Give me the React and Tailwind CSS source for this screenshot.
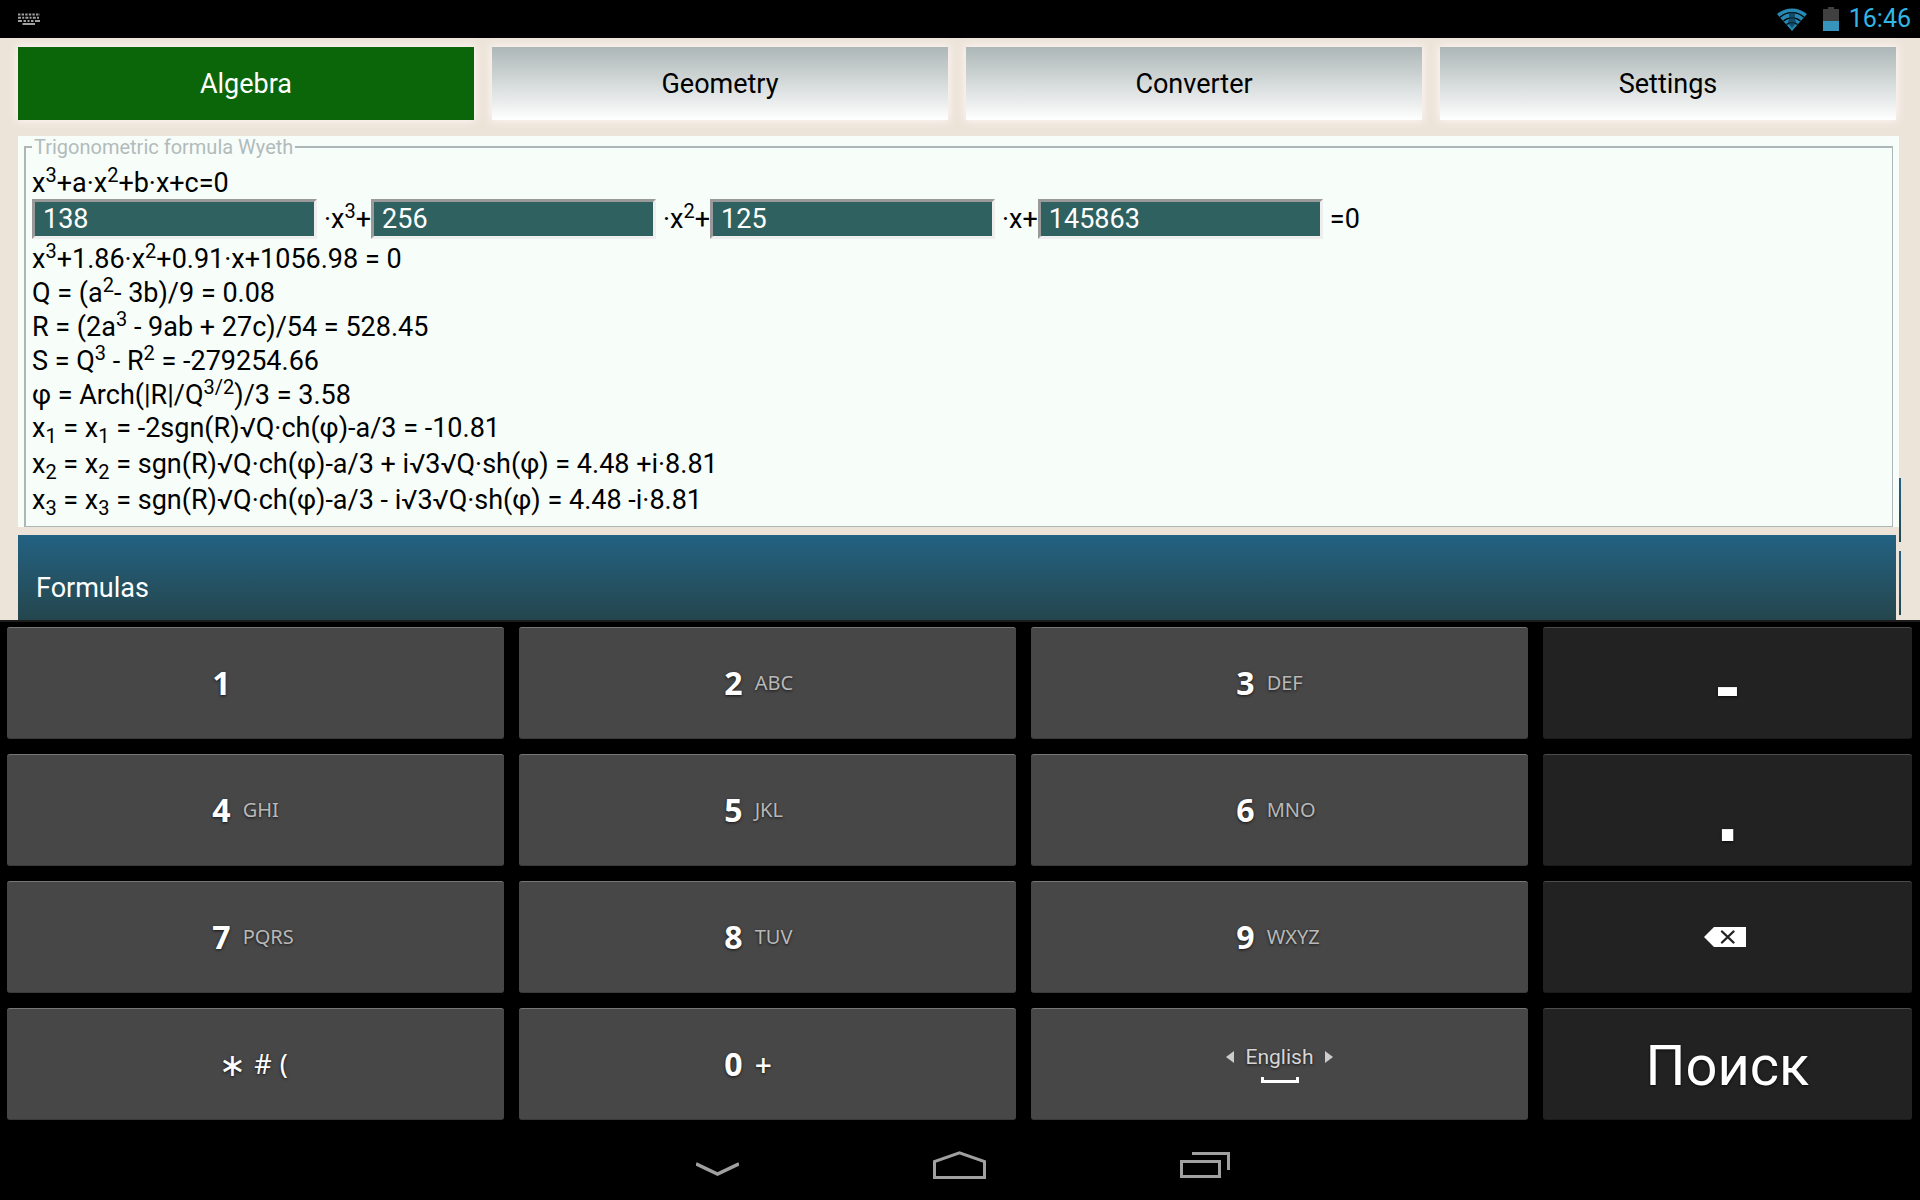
import { useState } from 'react';

const TABS = ['Algebra', 'Geometry', 'Converter', 'Settings'];

const KEYS = [
  [{ digit: '1', letters: '' }, { digit: '2', letters: 'ABC' }, { digit: '3', letters: 'DEF' }],
  [{ digit: '4', letters: 'GHI' }, { digit: '5', letters: 'JKL' }, { digit: '6', letters: 'MNO' }],
  [{ digit: '7', letters: 'PQRS' }, { digit: '8', letters: 'TUV' }, { digit: '9', letters: 'WXYZ' }],
];

const keyBase = 'flex items-center h-28 rounded-[3px] border-t border-b text-white [text-shadow:0_1px_3px_rgba(0,0,0,0.7)]';
const lightKey = `${keyBase} bg-[#474747] border-t-[#767676] border-b-[#3a3a3a]`;
const darkKey = `${keyBase} justify-center bg-[#222222] border-t-[#4c4c4c] border-b-[#1a1a1a]`;

function Sup({ children }) {
  return <sup className="text-[20px] top-[-10px]">{children}</sup>;
}

function Sub({ children }) {
  return <sub className="text-[20px] bottom-[-6px]">{children}</sub>;
}

function KeyboardIcon() {
  return (
    <svg width="22" height="12" viewBox="0 0 22 12" stroke="#a0a0a0" strokeWidth="2" fill="none">
      <path d="M0 1.5h22" strokeDasharray="2.4 1.2" />
      <path d="M0 4.8h22" strokeDasharray="3 1.2 2 1.2" />
      <path d="M0 8h4M5.5 8h2.5M9.5 8h2M13 8h2.5M17 8h5" />
      <path d="M4.5 11h12.5" />
    </svg>
  );
}

function WifiIcon() {
  return (
    <svg width="30" height="23" viewBox="0 0 30 23">
      <path d="M0 6A23 23 0 0 1 30 6L15 23Z" fill="#2688b3" />
      <path d="M3 9.2A18 18 0 0 1 27 9.2M6.5 13A13 13 0 0 1 23.5 13M9.5 16.6A8.5 8.5 0 0 1 20.5 16.6" stroke="#000" strokeWidth="1.3" fill="none" />
      <path d="M15 3.5L18 6L18 10L19 15L15 20L11 15L12 10L12 6Z" fill="#0b3a50" opacity="0.75" />
    </svg>
  );
}

function BatteryIcon() {
  return (
    <svg width="16" height="24" viewBox="0 0 16 24">
      <path d="M5 0h6v2h5v12H0V2h5Z" fill="#404040" />
      <path d="M0 14h16v10H0Z" fill="#3794bb" />
    </svg>
  );
}

function StatusBar() {
  return (
    <header className="flex items-center justify-between h-[38px] pl-[18px] pr-[9px] bg-black">
      <KeyboardIcon />
      <div className="flex items-center">
        <WifiIcon />
        <div className="ml-4 mr-2.5"><BatteryIcon /></div>
        <time className="text-[25px] leading-[38px] text-[#33b5e5]">16:46</time>
      </div>
    </header>
  );
}

function Coefficient({ label, value, onChange, children }) {
  return (
    <>
      <input
        type="text"
        aria-label={label}
        className="w-[285px] h-10 pl-2 border-[3px] border-t-[#999] border-l-[#999] border-r-[#eee] border-b-[#eee] bg-[#2f6160] text-white outline-none"
        value={value}
        onChange={(e) => onChange(e.target.value)}
      />
      <span className="pl-[7px]">{children}</span>
    </>
  );
}

function FormulaPanel() {
  const [coef, setCoef] = useState({ a: '138', b: '256', c: '125', d: '145863' });
  const set = (name) => (value) => setCoef({ ...coef, [name]: value });

  return (
    <section className="mr-[21px] bg-[#f7fdf9] px-1.5">
      <fieldset className="border-t-2 border-l-2 border-r border-b border-[#adb7b7] px-1.5 pb-2">
        <legend className="px-0.5 text-[20px] leading-[22px] text-[#b2bbbb]">Trigonometric formula Wyeth</legend>
        <div className="pt-[9px] leading-8">x<Sup>3</Sup>+a·x<Sup>2</Sup>+b·x+c=0</div>
        <div className="flex items-center leading-10 whitespace-nowrap">
          <Coefficient label="a" value={coef.a} onChange={set('a')}>·x<Sup>3</Sup>+</Coefficient>
          <Coefficient label="b" value={coef.b} onChange={set('b')}>·x<Sup>2</Sup>+</Coefficient>
          <Coefficient label="c" value={coef.c} onChange={set('c')}>·x+</Coefficient>
          <Coefficient label="d" value={coef.d} onChange={set('d')}>=0</Coefficient>
        </div>
        <div className="pt-[3px] leading-[34px]">
          <p>x<Sup>3</Sup>+1.86·x<Sup>2</Sup>+0.91·x+1056.98 = 0</p>
          <p>Q = (a<Sup>2</Sup>- 3b)/9 = 0.08</p>
          <p>R = (2a<Sup>3</Sup> - 9ab + 27c)/54 = 528.45</p>
          <p>S = Q<Sup>3</Sup> - R<Sup>2</Sup> = -279254.66</p>
          <p>φ = Arch(|R|/Q<Sup>3/2</Sup>)/3 = 3.58</p>
        </div>
        <div className="-mt-0.5 leading-9">
          <p>x<Sub>1</Sub> = x<Sub>1</Sub> = -2sgn(R)√Q·ch(φ)-a/3 = -10.81</p>
          <p>x<Sub>2</Sub> = x<Sub>2</Sub> = sgn(R)√Q·ch(φ)-a/3 + i√3√Q·sh(φ) = 4.48 +i·8.81</p>
          <p>x<Sub>3</Sub> = x<Sub>3</Sub> = sgn(R)√Q·ch(φ)-a/3 - i√3√Q·sh(φ) = 4.48 -i·8.81</p>
        </div>
      </fieldset>
    </section>
  );
}

function Keypad() {
  return (
    <div className="grid grid-cols-[497fr_497fr_497fr_369fr] gap-[15px] pt-[5px] pl-[7px] pr-2 border-t-2 border-[#1c1c1c] bg-black font-['Noto_Sans',sans-serif]">
      {KEYS.map((row, i) => (
        <div key={i} className="contents">
          {row.map((k) => (
            <button key={k.digit} type="button" className={`${lightKey} gap-3`}>
              <span className="w-[45%] text-right text-[32px] font-bold">{k.digit}</span>
              <span className="text-[20px] text-[#b8b8b8]">{k.letters}</span>
            </button>
          ))}
          {i === 0 && <button type="button" className={`${darkKey} text-[72px] leading-[72px] font-bold`}>-</button>}
          {i === 1 && <button type="button" className={`${darkKey} pt-2 font-['Liberation_Sans',sans-serif] text-[80px] leading-[80px] font-bold`}>.</button>}
          {i === 2 && (
            <button type="button" aria-label="Backspace" className={darkKey}>
              <svg width="42" height="20" viewBox="0 0 42 20" className="mr-1.5">
                <path d="M0 10L10 0H42V20H10Z" fill="#fff" />
                <path d="M18 4.5L29.5 15.5M29.5 4.5L18 15.5" stroke="#222" strokeWidth="2.4" strokeLinecap="round" />
              </svg>
            </button>
          )}
        </div>
      ))}
      <button type="button" className={`${lightKey} justify-center gap-2 pr-1 text-[27px] leading-8`}>
        <span className="text-[32px]">∗</span>
        <span>#</span>
        <span>(</span>
      </button>
      <button type="button" className={`${lightKey} gap-3`}>
        <span className="w-[45%] text-right text-[32px] font-bold">0</span>
        <span className="text-[30px] font-medium">+</span>
      </button>
      <button type="button" className={`${lightKey} flex-col justify-center gap-2 font-[Roboto,sans-serif]`}>
        <span className="flex items-center gap-3 text-[21px] leading-6 text-[#d6d6d6]">
          <svg width="8" height="12" viewBox="0 0 8 12"><path d="M0 6L8 0V12Z" fill="#ccc" /></svg>
          English
          <svg width="8" height="12" viewBox="0 0 8 12"><path d="M8 6L0 0V12Z" fill="#ccc" /></svg>
        </span>
        <svg width="38" height="6" viewBox="0 0 38 6"><path d="M0 0H3V3H35V0H38V6H0Z" fill="#fff" /></svg>
      </button>
      <button type="button" className={`${darkKey} pt-1 font-[Roboto,sans-serif] text-[56px]`}>Поиск</button>
    </div>
  );
}

function NavBar() {
  return (
    <nav className="flex items-center justify-center gap-[194px] h-20 pt-2.5 pl-1.5 bg-black">
      <button type="button" aria-label="Hide keyboard" className="pt-2">
        <svg width="43" height="14" viewBox="0 0 43 14" fill="none" stroke="#a0a0a0" strokeWidth="3.4"><path d="M0 1.8L21.5 12L43 1.8" /></svg>
      </button>
      <button type="button" aria-label="Home">
        <svg width="53" height="28" viewBox="0 0 53 28" fill="none" stroke="#a0a0a0" strokeWidth="3"><path d="M1.5 26.5V10.5L26.5 1.8L51.5 10.5V26.5Z" /></svg>
      </button>
      <button type="button" aria-label="Recent apps">
        <svg width="50" height="26" viewBox="0 0 50 26" fill="none" stroke="#a0a0a0" strokeWidth="3"><path d="M1.5 9.5H39.5V24.5H1.5ZM12 1.5H48.5V18" /></svg>
      </button>
    </nav>
  );
}

function App() {
  const [tab, setTab] = useState('Algebra');

  return (
    <div className="min-h-screen bg-black font-[Roboto,sans-serif] text-[27px] text-black">
      <StatusBar />
      <main className="flex flex-col bg-[#ede4d9] pt-[9px] pl-[18px]">
        <div className="grid grid-cols-4 gap-[18px] pr-6">
          {TABS.map((t) => (
            <button
              key={t}
              type="button"
              onClick={() => setTab(t)}
              className={`h-[73px] pt-0.5 shadow-[0_0_8px_1px_#fff6f6] ${t === tab ? 'bg-[#0a6608] text-white' : 'bg-linear-to-b from-[#adb7b7] to-white'}`}
            >
              {t}
            </button>
          ))}
        </div>
        <div className="relative mt-4">
          <FormulaPanel />
          <div className="mt-2 mr-6 h-[85px] pl-[18px] pt-[19px] bg-linear-to-b from-[#226283] to-[#24464d] text-white leading-[68px]">Formulas</div>
          <div className="absolute right-[19px] bottom-[78px] w-0.5 h-16 bg-linear-to-b from-[#226283] to-[#24464d]" />
          <div className="absolute right-[19px] bottom-[5px] w-0.5 h-16 bg-linear-to-b from-[#226283] to-[#24464d]" />
        </div>
      </main>
      <Keypad />
      <NavBar />
    </div>
  );
}

export default App;
